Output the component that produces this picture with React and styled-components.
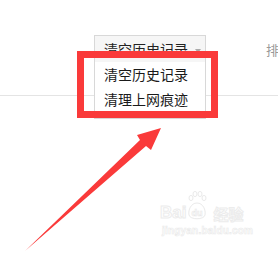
import React from 'react';
import styled, { createGlobalStyle } from 'styled-components';

const GlobalStyle = createGlobalStyle`
  html, body {
    margin: 0;
    padding: 0;
    background: #fff;
    overflow: hidden;
  }
`;

const Page = styled.div`
  position: relative;
  width: 278px;
  height: 261px;
  overflow: hidden;
  background: #fff;
  font-family: "Noto Sans CJK SC", "Liberation Sans", sans-serif;
`;

const Toolbar = styled.div`
  display: flex;
  align-items: flex-start;
  height: 60px;
  padding: 35px 0 0 94px;
  border-bottom: 1px solid #e4e4e4;
`;

const Dropdown = styled.div`
  position: relative;
  flex-shrink: 0;
  width: 112px;
  box-sizing: border-box;
`;

const Trigger = styled.div`
  display: flex;
  align-items: center;
  height: 26px;
  padding-left: 9px;
  border: 1px solid #d8d8d8;
  border-bottom: none;
  background: #f6f6f6;
  color: #222;
  font-size: 14px;
  line-height: 26px;
  white-space: nowrap;
`;

const Caret = styled.span`
  flex-shrink: 0;
  width: 0;
  height: 0;
  margin-left: 7px;
  margin-top: 3px;
  border-left: 3px solid transparent;
  border-right: 3px solid transparent;
  border-top: 4px solid #aaa;
`;

const Menu = styled.ul`
  position: absolute;
  top: 27px;
  left: 0;
  right: 0;
  margin: 0;
  padding: 0 0 6px;
  list-style: none;
  background: #fff;
  border: 1px solid #d8d8d8;
  border-top: none;
  z-index: 2;
`;

const MenuItem = styled.li`
  height: 25px;
  line-height: 25px;
  padding-left: 9px;
  font-size: 14px;
  color: #1a1a1a;
  white-space: nowrap;
`;

const SortTab = styled.div`
  flex-shrink: 0;
  margin-left: 60px;
  padding-top: 5px;
  font-size: 13px;
  color: #999;
  white-space: nowrap;
`;

const Highlight = styled.div`
  position: absolute;
  left: 77px;
  top: 51px;
  width: 127px;
  height: 53px;
  border: 7px solid #fa3a3a;
  z-index: 3;
`;

const Overlay = styled.svg`
  position: absolute;
  left: 0;
  top: 0;
  z-index: 4;
`;

const Watermark = styled.div`
  position: absolute;
  left: 160px;
  top: 204px;
  display: flex;
  flex-direction: column;
  align-items: flex-start;
  z-index: 1;
  color: #fff;
`;

const MarkRow = styled.div`
  display: flex;
  align-items: flex-end;
  font-family: "Liberation Sans", sans-serif;
  font-size: 17px;
  font-weight: bold;
  -webkit-text-stroke: 1px #ececec;
  line-height: 1;
`;

const MarkCjk = styled.span`
  margin-left: 6px;
  font-family: "Noto Sans CJK SC", sans-serif;
  font-size: 15px;
`;

const MarkUrl = styled.div`
  margin-top: 4px;
  margin-left: 2px;
  font-family: "Liberation Sans", sans-serif;
  font-size: 10px;
  font-weight: bold;
  letter-spacing: 0.2px;
  -webkit-text-stroke: 0.6px #eaeaea;
`;

const DuBadge = styled.div`
  position: relative;
  margin-left: 1px;
  width: 20px;
  height: 17px;
`;

const App = () => (
  <>
    <GlobalStyle />
    <Page>
      <Toolbar>
        <Dropdown>
          <Trigger>
            清空历史记录
            <Caret />
          </Trigger>
          <Menu>
            <MenuItem>清空历史记录</MenuItem>
            <MenuItem>清理上网痕迹</MenuItem>
          </Menu>
        </Dropdown>
        <SortTab>排序</SortTab>
      </Toolbar>

      <Watermark>
        <MarkRow>
          Bai
          <DuBadge>
            <svg width="20" height="31" viewBox="0 0 20 31" style={{ position: 'absolute', left: 0, bottom: 0 }}>
              <g fill="#fff" stroke="#eaeaea" strokeWidth="1">
                <ellipse cx="4" cy="8" rx="2" ry="2.6" />
                <ellipse cx="8" cy="4" rx="2" ry="2.6" />
                <ellipse cx="13" cy="4" rx="2" ry="2.6" />
                <ellipse cx="17" cy="8" rx="2" ry="2.6" />
                <path d="M10 13 C4 13 1 20 2 25 C3 30 17 30 18 25 C19 20 16 13 10 13 Z" />
              </g>
              <text x="10" y="26" textAnchor="middle" fontFamily="Liberation Sans, sans-serif" fontSize="9" fontWeight="bold" fill="#fff" stroke="#e8e8e8" strokeWidth="0.6">du</text>
            </svg>
          </DuBadge>
          <MarkCjk>经验</MarkCjk>
        </MarkRow>
        <MarkUrl>jingyan.baidu.com</MarkUrl>
      </Watermark>

      <Highlight />

      <Overlay width="278" height="261" viewBox="0 0 278 261">
        <polygon
          points="25,251 140,140 137,135 161,128 151,150 146,146"
          fill="#fa3a3a"
        />
      </Overlay>
    </Page>
  </>
);

export default App;
